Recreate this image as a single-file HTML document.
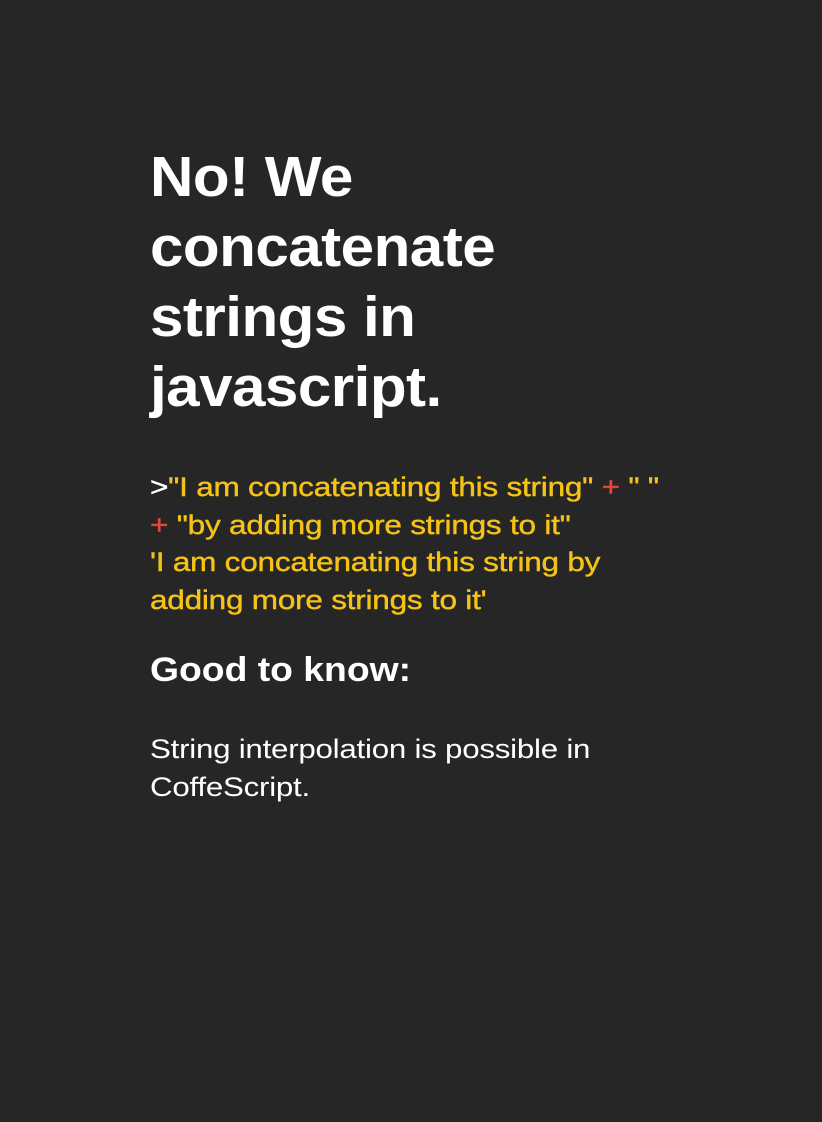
<!DOCTYPE html>
<html><head><style>
html,body{margin:0;padding:0;background:#262626;width:822px;height:1122px;overflow:hidden}
body{font-family:"Liberation Sans",Arial,sans-serif;color:#fff}
.w{position:absolute;left:150px;top:0;width:600px}
.w>*{transform-origin:0 0}
h1{position:absolute;top:142px;left:0;margin:0;font-size:57px;line-height:70px;font-weight:bold;white-space:nowrap;letter-spacing:-0.5px;transform:scaleX(1.055)}
.code{position:absolute;top:469px;left:0;font-size:26.5px;line-height:37.5px;color:#f5c317;white-space:nowrap;letter-spacing:-0.2px;-webkit-text-stroke:0.4px #f5c317;transform:scaleX(1.19)}
.code .g{color:#fff;-webkit-text-stroke:0.4px #fff}.code .r{color:#e8473c;-webkit-text-stroke:0.4px #e8473c}
h2{position:absolute;top:650px;left:0;margin:0;font-size:34px;line-height:40px;font-weight:bold;white-space:nowrap;transform:scaleX(1.097)}
p{position:absolute;top:731px;left:0;margin:0;font-size:26.5px;line-height:37.5px;white-space:nowrap;letter-spacing:-0.2px;transform:scaleX(1.18)}
</style></head><body>
<div class="w">
<h1>No! We<br>concatenate<br>strings in<br>javascript.</h1>
<div class="code"><span class="g">&gt;</span>"I am concatenating this string" <span class="r">+</span> " "<br><span class="r">+</span> "by adding more strings to it"<br>'I am concatenating this string by<br>adding more strings to it'</div>
<h2>Good to know:</h2>
<p>String interpolation is possible in<br>CoffeScript.</p>
</div>
</body></html>
